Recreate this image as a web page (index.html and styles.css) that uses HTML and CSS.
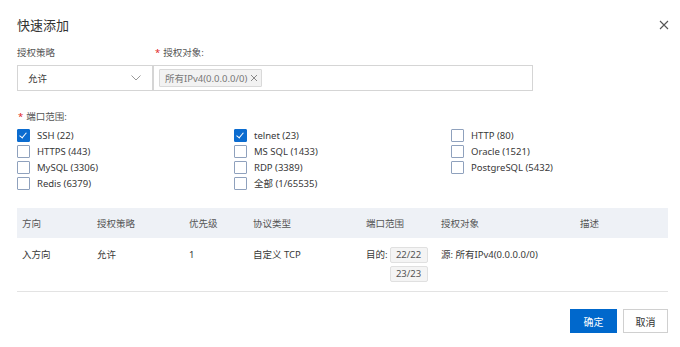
FILE: index.html
```html
<!DOCTYPE html>
<html lang="zh">
<head>
    <meta charset="UTF-8">
    <title>快速添加</title>
    <link rel="stylesheet" href="styles.css">
</head>
<body>
    <div class="dialog">
        <div class="dialog-header">
            <h1>快速添加</h1>
            <span class="close">
                <svg width="10" height="10" viewBox="0 0 10 10"><path d="M1 1L9 9M9 1L1 9" stroke="#555" stroke-width="1.1" fill="none"/></svg>
            </span>
        </div>

        <div class="field-row">
            <div class="field field-policy">
                <div class="field-label">授权策略</div>
                <div class="select">
                    <span>允许</span>
                    <svg width="10" height="6" viewBox="0 0 10 6"><path d="M0.5 0.5L5 5L9.5 0.5" stroke="#999" stroke-width="1" fill="none"/></svg>
                </div>
            </div>
            <div class="field field-target">
                <div class="field-label"><span class="req">*</span>授权对象:</div>
                <div class="tag-input">
                    <span class="tag">所有IPv4(0.0.0.0/0)
                        <svg width="8" height="8" viewBox="0 0 8 8"><path d="M1 1L7 7M7 1L1 7" stroke="#888" stroke-width="1" fill="none"/></svg>
                    </span>
                </div>
            </div>
        </div>

        <div class="field-label ports-label"><span class="req">*</span>端口范围:</div>
        <div class="ports">
            <label class="check"><span class="box checked"></span>SSH (22)</label>
            <label class="check"><span class="box checked"></span>telnet (23)</label>
            <label class="check"><span class="box"></span>HTTP (80)</label>
            <label class="check"><span class="box"></span>HTTPS (443)</label>
            <label class="check"><span class="box"></span>MS SQL (1433)</label>
            <label class="check"><span class="box"></span>Oracle (1521)</label>
            <label class="check"><span class="box"></span>MySQL (3306)</label>
            <label class="check"><span class="box"></span>RDP (3389)</label>
            <label class="check"><span class="box"></span>PostgreSQL (5432)</label>
            <label class="check"><span class="box"></span>Redis (6379)</label>
            <label class="check"><span class="box"></span>全部 (1/65535)</label>
        </div>

        <table class="rules">
            <colgroup>
                <col style="width:75px"><col style="width:92px"><col style="width:64px"><col style="width:113px">
                <col style="width:75px"><col style="width:139px"><col>
            </colgroup>
            <thead>
                <tr>
                    <th>方向</th><th>授权策略</th><th>优先级</th><th>协议类型</th><th>端口范围</th><th>授权对象</th><th>描述</th>
                </tr>
            </thead>
            <tbody>
                <tr>
                    <td>入方向</td>
                    <td>允许</td>
                    <td>1</td>
                    <td>自定义 TCP</td>
                    <td>
                        <div class="ports-cell">
                            <span class="dest">目的:</span>
                            <div class="port-tags">
                                <span class="port-tag">22/22</span>
                                <span class="port-tag">23/23</span>
                            </div>
                        </div>
                    </td>
                    <td>源: 所有IPv4(0.0.0.0/0)</td>
                    <td></td>
                </tr>
            </tbody>
        </table>

        <div class="footer">
            <button class="btn btn-primary">确定</button>
            <button class="btn">取消</button>
        </div>
    </div>
</body>
</html>
```

FILE: styles.css
```css
body {
    margin: 0;
    background: #fff;
    font-family: "Noto Sans", "Noto Sans CJK SC", sans-serif;
    font-size: 9.5px;
    color: #383838;
}

.dialog {
    padding: 16px 12px 0 17px;
}

.dialog-header {
    display: flex;
    justify-content: space-between;
    align-items: center;
    height: 18px;
}

.dialog-header h1 {
    margin: 0;
    font-size: 13px;
    font-weight: normal;
    color: #333;
    line-height: 18px;
}

.close {
    display: flex;
    margin-right: -1px;
}

.field-row {
    display: flex;
    margin-top: 12px;
}

.field-label {
    line-height: 14px;
    color: #555;
}

.req {
    color: #e02020;
    margin-right: 3px;
    margin-left: 1px;
}

.field-policy {
    width: 136px;
}

.field-target .field-label {
    padding-left: 1px;
}

.select {
    margin-top: 5px;
    height: 24px;
    border: 1px solid #d5d5d5;
    display: flex;
    align-items: center;
    justify-content: space-between;
    padding: 0 11px 0 10px;
}

.tag-input {
    margin-top: 5px;
    width: 373px;
    height: 24px;
    border: 1px solid #d5d5d5;
    display: flex;
    align-items: center;
    padding-left: 5px;
}

.tag {
    display: inline-flex;
    align-items: center;
    gap: 3px;
    height: 16px;
    padding: 0 3px 0 5px;
    background: #f2f2f2;
    border: 1px solid #d9d9d9;
    color: #777;
    border-radius: 1px;
}

.ports-label {
    margin-top: 19px;
}

.ports {
    margin-top: 3px;
    display: grid;
    grid-template-columns: 217px 217px 1fr;
    grid-auto-rows: 16px;
}

.check {
    display: flex;
    align-items: center;
}

.box {
    width: 11px;
    height: 11px;
    border: 1px solid #8fa1bd;
    border-radius: 1px;
    margin-right: 7px;
    position: relative;
    background: #fff;
}

.box.checked {
    background: #0b6cd0;
    border-color: #0b6cd0;
}

.box.checked::after {
    content: "";
    position: absolute;
    left: 3px;
    top: 1px;
    width: 3px;
    height: 6px;
    border: solid #fff;
    border-width: 0 1.5px 1.5px 0;
    transform: rotate(40deg);
}

.rules {
    margin-top: 17px;
    width: 651px;
    border-collapse: collapse;
    table-layout: fixed;
}

.rules th {
    background: #eef1f6;
    height: 30px;
    padding: 0 5px;
    text-align: left;
    font-weight: normal;
    color: #555;
}

.rules td {
    vertical-align: top;
    padding: 10px 5px 0;
    height: 43px;
    line-height: 14px;
    border-bottom: 1px solid #e3e3e3;
}

.ports-cell {
    display: flex;
    margin-top: -1px;
}

.dest {
    margin-top: 1px;
    margin-right: 2px;
}

.port-tags {
    display: flex;
    flex-direction: column;
    gap: 3px;
}

.port-tag {
    width: 36px;
    height: 14px;
    line-height: 14px;
    text-align: center;
    background: #f4f4f4;
    border: 1px solid #e0e0e0;
    border-radius: 2px;
    color: #555;
}

.footer {
    display: flex;
    justify-content: flex-end;
    gap: 6px;
    margin-top: 17px;
}

.btn {
    height: 24px;
    padding: 0;
    width: 45px;
    font-family: inherit;
    font-size: 10px;
    background: #fff;
    border: 1px solid #d0d0d0;
    color: #333;
    cursor: pointer;
}

.btn-primary {
    width: 47px;
    background: #0068cc;
    border-color: #0068cc;
    color: #fff;
}
```
